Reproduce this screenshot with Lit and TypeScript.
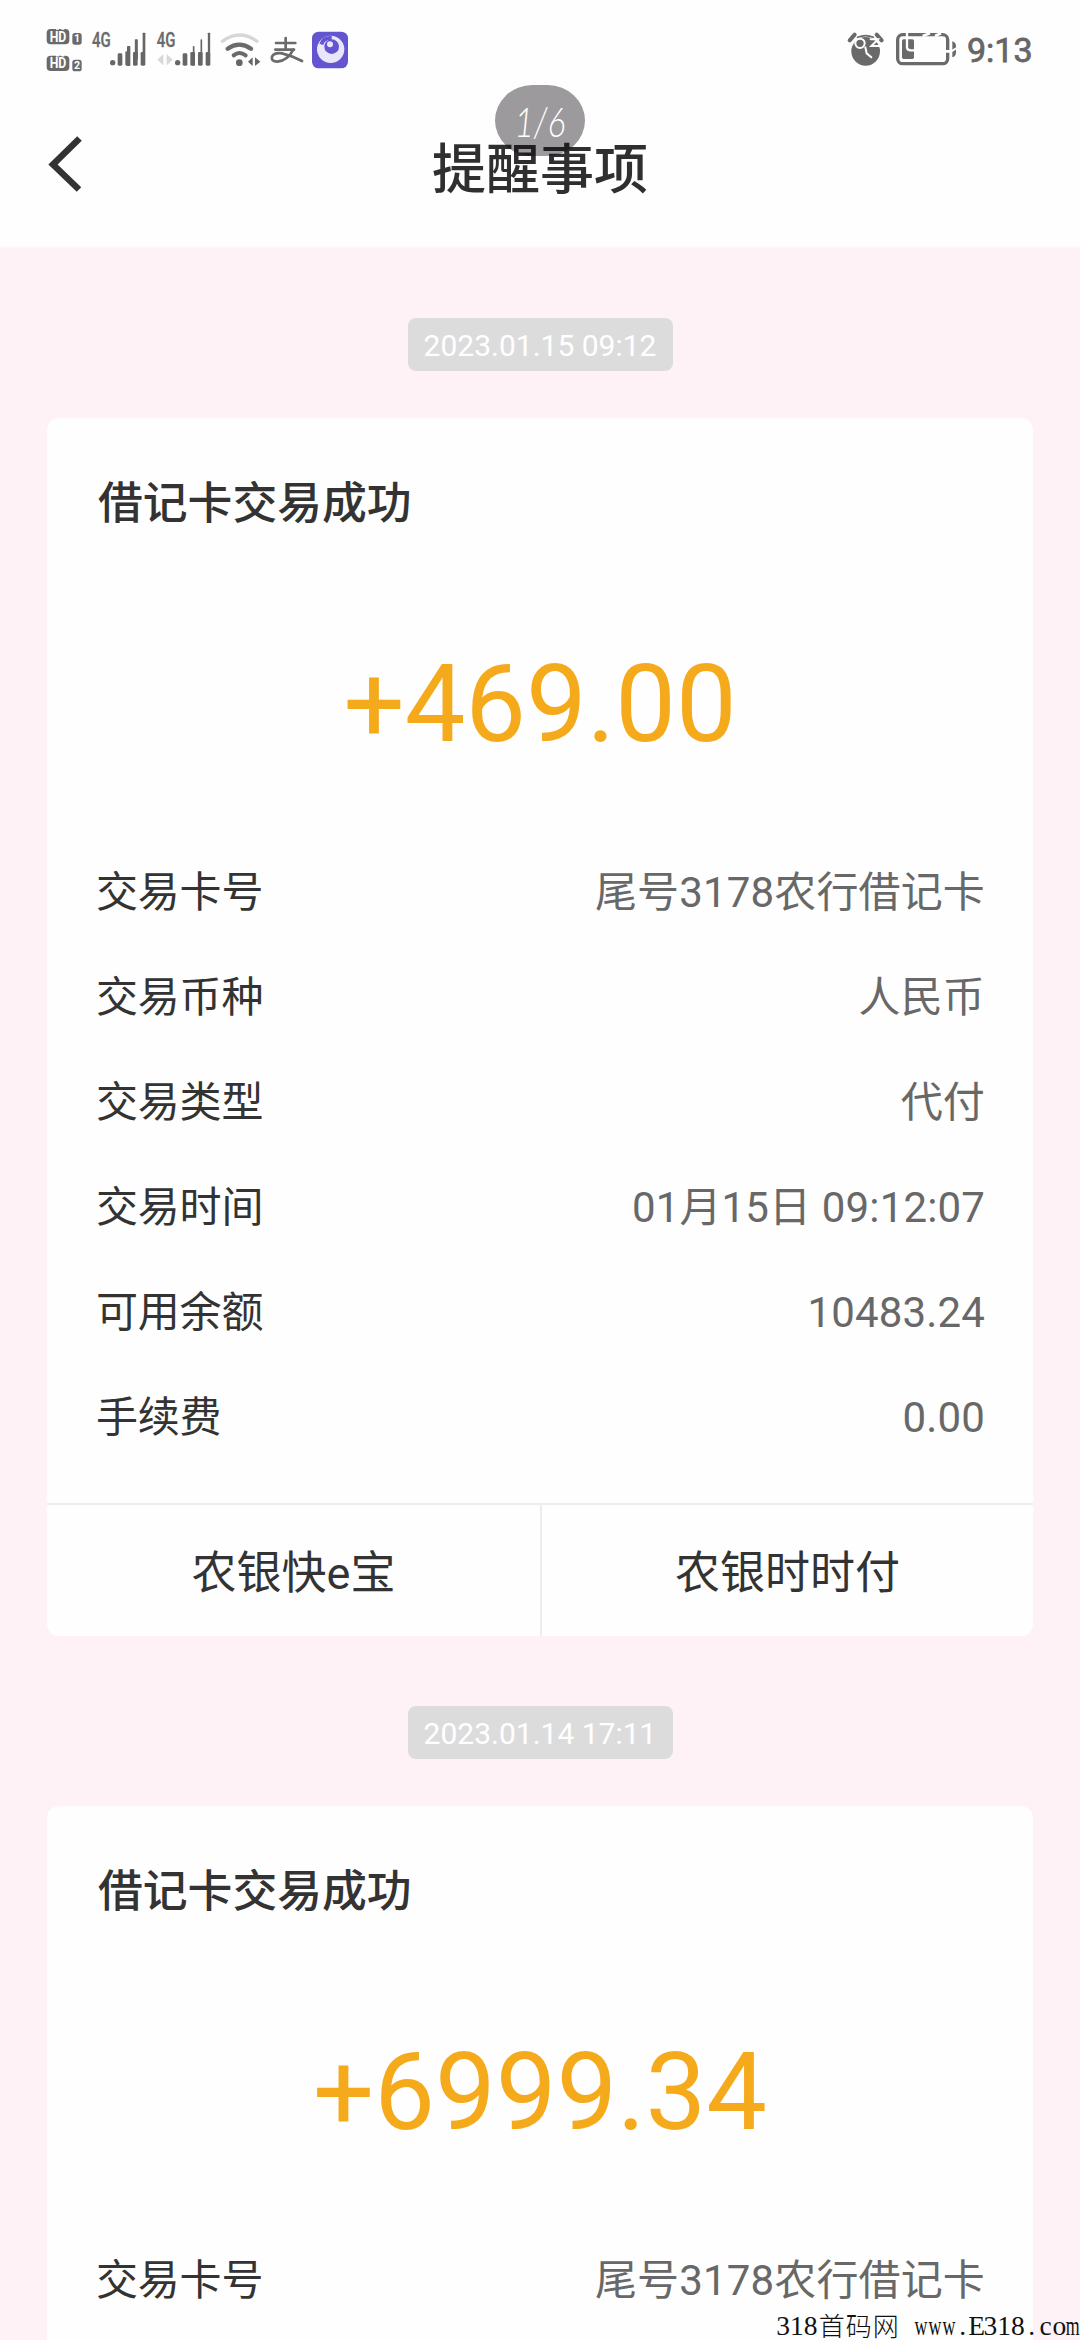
import { LitElement, html, css, svg } from "lit";
import { customElement, property } from "lit/decorators.js";

interface Row {
  label: string;
  value: string;
}

interface Notice {
  stamp: string;
  title: string;
  amount: string;
  rows: Row[];
  actions: string[];
}

const NOTICES: Notice[] = [
  {
    stamp: "2023.01.15 09:12",
    title: "借记卡交易成功",
    amount: "+469.00",
    rows: [
      { label: "交易卡号", value: "尾号3178农行借记卡" },
      { label: "交易币种", value: "人民币" },
      { label: "交易类型", value: "代付" },
      { label: "交易时间", value: "01月15日 09:12:07" },
      { label: "可用余额", value: "10483.24" },
      { label: "手续费", value: "0.00" },
    ],
    actions: ["农银快e宝", "农银时时付"],
  },
  {
    stamp: "2023.01.14 17:11",
    title: "借记卡交易成功",
    amount: "+6999.34",
    rows: [{ label: "交易卡号", value: "尾号3178农行借记卡" }],
    actions: [],
  },
];

/** A dot and four bars; the taller bars carry narrower tips above a wide base. */
const signal = (x: number, bars: number[], tips: number[][]) => svg`
  <circle cx=${x} cy="158" r="8" />
  ${bars.map((top, i) => svg`<rect x=${x + 15 + i * 23} y=${top} width="14" height=${167 - top} rx="4" />`)}
  ${tips.map(([i, top, w]) => svg`<rect x=${x + 25 + i * 23 - w / 2} y=${top} width=${w} height="60" rx="2" />`)}
`;

const hdBadge = (y: number, n: string) => svg`
  <rect x="50" y=${y} width="68" height="46" rx="12" fill="#6a6a6a" />
  <text x="84" y=${y + 38} class="hd" text-anchor="middle" textLength="50" lengthAdjust="spacingAndGlyphs">HD</text>
  <path d="M78 ${y - 1}h26" stroke="#fff" stroke-width="7" stroke-dasharray="9 7" />
  <rect x="127" y=${y + 12} width="28" height="35" rx="8" fill="#6a6a6a" />
  <text x="141" y=${y + 40} class="sim" text-anchor="middle">${n}</text>
`;

@customElement("status-bar")
export class StatusBar extends LitElement {
  static styles = css`
    :host {
      display: flex;
      justify-content: space-between;
      height: 80px;
      padding: 10px 47px 0 30px;
      color: #666;
    }
    .right {
      display: flex;
    }
    .time {
      font: 400 34px/80px Roboto, sans-serif;
      width: 66px;
      color: #666;
      -webkit-text-stroke: 0.8px #666;
    }
    .hd {
      font: 700 44px Roboto, sans-serif;
      fill: #fff;
    }
    .sim {
      font: 700 32px Roboto, sans-serif;
      fill: #fff;
    }
    .net {
      font: 500 58px Roboto, sans-serif;
      fill: #6a6a6a;
      stroke: #6a6a6a;
      stroke-width: 1;
    }
  `;

  render() {
    return html`
      <svg width="340" height="80" viewBox="0 0 1020 240" fill="#666">
        ${hdBadge(57, "1")} ${hdBadge(137, "2")}
        <text x="186" y="112" class="net" textLength="56" lengthAdjust="spacingAndGlyphs">4G</text>
        ${signal(248, [130, 124, 126, 126], [[1, 108, 10], [2, 88, 9], [3, 68, 8]])}
        <text x="380" y="112" class="net" textLength="56" lengthAdjust="spacingAndGlyphs">4G</text>
        <path d="M400 132v34l-18-17zM410 132v34l18-17z" fill="#d8d8d8" />
        ${signal(443, [130, 126, 126, 126], [[1, 108, 5], [2, 88, 5], [3, 68, 7]])}
        <g fill="none" stroke-linecap="round">
          <path d="M577 94Q629 56 681 94" stroke="#d6d6d6" stroke-width="10" />
          <path d="M593 116Q628 92 663 116" stroke="#6a6a6a" stroke-width="13" />
          <path d="M611 136Q628 122 647 136" stroke="#6a6a6a" stroke-width="12" />
        </g>
        <circle cx="628" cy="158" r="10" />
        <path d="M668 142v26l-14-13zM675 142v26l16-13z" />
        <g fill="none" stroke="#6a6a6a" stroke-width="8" stroke-linecap="round" stroke-linejoin="round">
          <path d="M738 99h58M767 84v32M736 119h56" />
          <path d="M790 119Q772 153 742 155Q722 154 726 140Q732 127 756 130Q786 137 816 153" />
        </g>
        <rect x="846" y="65" width="108" height="110" rx="20" fill="#6354cf" />
        <circle cx="902" cy="118" r="41" fill="#e9e6fc" />
        <circle cx="905" cy="110" r="22" fill="#6354cf" />
        <path d="M874 103Q880 82 905 84" fill="none" stroke="#6354cf" stroke-width="12" />
        <circle cx="900" cy="103" r="9" fill="#e9e6fc" />
      </svg>
      <div class="right">
        <svg width="147" height="80" viewBox="0 0 441 240" fill="#6a6a6a">
          <circle cx="137" cy="124" r="43" />
          <g fill="none" stroke-linecap="round">
            <path d="M89 91l15-17M185 91l-15-17" stroke="#6a6a6a" stroke-width="12" />
            <path d="M113 82Q137 72 160 82" stroke="#6a6a6a" stroke-width="5" />
            <circle cx="120" cy="100" r="14" stroke="#fff" stroke-width="6" />
            <path d="M152 88h22l-20 20h26M136 112l4 18 14 12" stroke="#fff" stroke-width="6" />
          </g>
          <rect x="233" y="74" width="150" height="87" rx="15" fill="none" stroke="#6a6a6a" stroke-width="10" />
          <rect x="246" y="88" width="36" height="59" rx="5" />
          <path d="M261 66v46q0 9 12 9h14" fill="none" stroke="#fff" stroke-width="7" />
          <path d="M308 78l22 -8M345 78l18 -8M376 124h18" stroke="#fff" stroke-width="8" />
          <path d="M397 94q11 4 11 14v20q0 10-11 14z" />
          <path d="M394 124l16-10" stroke="#fff" stroke-width="6" />
        </svg>
        <div class="time">9:13</div>
      </div>
    `;
  }
}

@customElement("notice-card")
export class NoticeCard extends LitElement {
  @property({ attribute: false }) notice!: Notice;

  static styles = css`
    :host {
      display: flex;
      flex-direction: column;
      align-items: center;
    }
    .stamp {
      box-sizing: border-box;
      width: 265px;
      height: 53px;
      border-radius: 8px;
      background: #dddcdd;
      color: #fff;
      font-size: 30px;
      line-height: 56px;
      text-align: center;
      white-space: nowrap;
    }
    .card {
      align-self: stretch;
      min-height: 640px;
      margin: 47px 47px 0;
      border-radius: 12px;
      background: #fefefe;
      overflow: hidden;
    }
    .title {
      padding: 53px 51px 0;
      font-size: 44.8px;
      font-weight: 500;
      line-height: 66px;
      color: #333;
    }
    .amount {
      padding-top: 102px;
      height: 201px;
      font-size: 108px;
      line-height: 130px;
      text-align: center;
      color: #f5aa1c;
    }
    .rows {
      padding: 0 48px 0 49px;
    }
    .row {
      display: flex;
      justify-content: space-between;
      align-items: center;
      height: 105px;
      font-size: 42px;
      line-height: 60px;
    }
    .label {
      color: #333;
      letter-spacing: -0.2px;
    }
    .value {
      color: #686868;
      letter-spacing: 0.15px;
    }
    .actions {
      display: grid;
      grid-template-columns: 1fr 1fr;
      margin-top: 33px;
      border-top: 2px solid #ededee;
    }
    .action {
      height: 131px;
      font-size: 45px;
      line-height: 138px;
      text-align: center;
      color: #333;
    }
    .action + .action {
      border-left: 2px solid #ededee;
    }
  `;

  render() {
    const { stamp, title, amount, rows, actions } = this.notice;
    return html`
      <div class="stamp">${stamp}</div>
      <div class="card">
        <div class="title">${title}</div>
        <div class="amount">${amount}</div>
        <div class="rows">
          ${rows.map(
            (r) => html`<div class="row"><span class="label">${r.label}</span><span class="value">${r.value}</span></div>`
          )}
        </div>
        ${actions.length
          ? html`<div class="actions">${actions.map((a) => html`<div class="action">${a}</div>`)}</div>`
          : null}
      </div>
    `;
  }
}

@customElement("app-root")
export class AppRoot extends LitElement {
  static styles = css`
    :host {
      display: block;
      position: relative;
      width: 1080px;
      height: 2340px;
      overflow: hidden;
      background: #fef2f6;
      font-family: Roboto, "Noto Sans CJK SC", sans-serif;
    }
    .header {
      position: relative;
      box-sizing: border-box;
      height: 248px;
      background: #fefefe;
      border-bottom: 2px solid #fbf8f9;
    }
    .nav {
      display: grid;
      grid-template-columns: 120px 1fr 120px;
      align-items: center;
      height: 156px;
    }
    .back {
      margin-left: 46px;
      margin-top: -8px;
    }
    .heading {
      padding-top: 5px;
      font-size: 54px;
      font-weight: 500;
      line-height: 80px;
      text-align: center;
      color: #2f2f2f;
    }
    .counter {
      position: absolute;
      left: 495px;
      top: 85px;
      width: 90px;
      height: 71px;
      border-radius: 38px / 36px;
      background: rgba(10, 5, 10, 0.4);
      color: #fff;
      display: flex;
      justify-content: center;
      font: italic 300 42px/73px Lato, sans-serif;
    }
    .counter span {
      transform: scaleX(0.8);
    }
    .feed {
      display: flex;
      flex-direction: column;
      gap: 70px;
      padding-top: 70px;
    }
    .mark {
      position: absolute;
      right: 0;
      bottom: 0;
      display: flex;
      height: 28px;
      font: 27.5px/28px "Liberation Serif", "Noto Sans CJK SC", serif;
      color: #111;
      white-space: pre;
    }
    .cjk {
      font-family: "Noto Sans CJK SC", sans-serif;
      font-weight: 300;
      font-size: 26px;
      line-height: 26px;
      letter-spacing: 1px;
      margin: 0 1px;
    }
    .cell {
      display: flex;
      justify-content: center;
      width: 13.8px;
    }
    .narrow {
      transform: scaleX(0.65);
    }
  `;

  private cells(text: string) {
    return [...text].map(
      (c) => html`<span class="cell"><span class=${c === "w" || c === "m" ? "narrow" : ""}>${c}</span></span>`
    );
  }

  render() {
    return html`
      <div class="header">
        <status-bar></status-bar>
        <div class="nav">
          <svg class="back" width="40" height="60" viewBox="0 0 40 60" fill="none" stroke="#333" stroke-width="6.5">
            <path d="M33.500 4.500L7 30.500L33 55.500" />
          </svg>
          <div class="heading">提醒事项</div>
        </div>
        <div class="counter"><span>1/6</span></div>
      </div>
      <div class="feed">${NOTICES.map((n) => html`<notice-card .notice=${n}></notice-card>`)}</div>
      <div class="mark">${this.cells("318")}<span class="cjk">首码网</span>${this.cells(" www.E318.com")}</div>
    `;
  }
}
